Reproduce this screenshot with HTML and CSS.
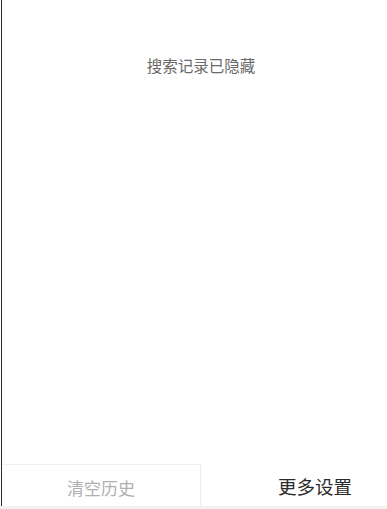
FILE: index.html
```html
<!DOCTYPE html>
<html lang="zh">
<head>
<meta charset="utf-8">
<link rel="stylesheet" href="styles.css">
</head>
<body>
<div class="panel">
  <div class="content">
    <p class="notice">搜索记录已隐藏</p>
  </div>
  <div class="actions">
    <div class="btn btn-clear">清空历史</div>
    <div class="btn btn-more">更多设置</div>
  </div>
</div>
<div class="strip"></div>
</body>
</html>
```
FILE: styles.css
```css
html, body {
  margin: 0;
  padding: 0;
  background: #ffffff;
  font-family: "Noto Sans CJK SC", "Noto Sans", sans-serif;
}
.panel {
  margin-left: 1px;
  height: 506px;
  border-left: 1px solid #2a2a2a;
  display: flex;
  flex-direction: column;
  box-sizing: border-box;
}
.content {
  flex: 1;
  display: flex;
  justify-content: center;
  padding-top: 53px;
  padding-left: 13px;
}
.notice {
  margin: 0;
  font-size: 15.5px;
  line-height: 24px;
  color: #6a6a6a;
  height: 24px;
}
.actions {
  height: 42px;
  display: flex;
}
.btn {
  display: flex;
  align-items: center;
  justify-content: center;
  box-sizing: border-box;
}
.btn-clear {
  width: 199px;
  border-top: 1px solid #f0f0f0;
  border-right: 1px solid #eeeeee;
  color: #b0b0b0;
  font-size: 17px;
  padding-top: 3px;
}
.btn-more {
  flex: 1;
  color: #2b2b2b;
  font-size: 18.5px;
  padding-left: 42px;
  padding-top: 1px;
}
.strip {
  height: 3px;
  background: #f1f3f1;
}
```
